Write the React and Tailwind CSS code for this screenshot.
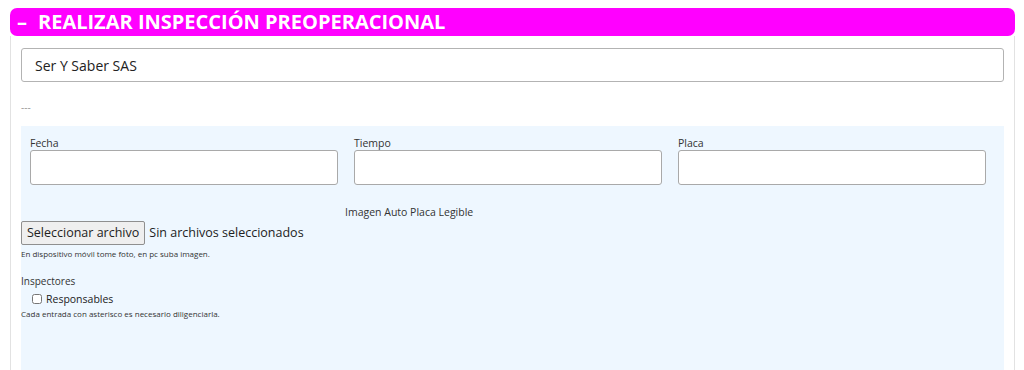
export default function App() {
  return (
    <div
      className="w-[1024px] h-[370px] overflow-hidden bg-white"
      style={{ fontFamily: '"Open Sans", "Noto Sans", sans-serif' }}
    >
      <div className="pt-[8px] pl-[10px] w-[1015px]">
        <div className="h-[28px] bg-[#ff00ff] rounded-[7px] flex items-center pl-[7px] text-white font-bold text-[20px] leading-none">
          <span className="mr-[11px]">–</span>
          <span>REALIZAR INSPECCIÓN PREOPERACIONAL</span>
        </div>

        <div className="border-l border-r border-[#e2e2e2] px-[10px] pt-[12px] h-[340px]">
          <div className="h-[34px] border border-[#b3b3b3] rounded-[3px] flex items-center pl-[13px] text-[14px] text-[#222]">
            Ser Y Saber SAS
          </div>

          <div className="mt-[20px] text-[10px] text-[#999] leading-[10px]">---</div>

          <div className="mt-[14px] bg-[#eef7ff] h-[260px] pt-[10px]">
            <div className="flex gap-[16px] pl-[9px]">
              {["Fecha", "Tiempo", "Placa"].map((label) => (
                <div key={label} className="w-[308px]">
                  <div className="text-[10.5px] text-[#333] leading-[14px]">{label}</div>
                  <div className="h-[35px] bg-white border border-[#a9a9a9] rounded-[3px]"></div>
                </div>
              ))}
            </div>

            <div className="mt-[20px] pl-[324px] text-[10.5px] text-[#333] leading-[14px]">
              Imagen Auto Placa Legible
            </div>

            <div className="mt-[2px] flex items-center text-[12.5px] text-[#222]">
              <button className="h-[24px] px-[5px] bg-[#efefef] border border-[#8f8f8f] rounded-[2px] leading-none">
                Seleccionar archivo
              </button>
              <span className="ml-[4px]">Sin archivos seleccionados</span>
            </div>

            <div className="mt-[3px] text-[8px] text-[#333] leading-[12px]">
              En dispositivo móvil tome foto, en pc suba imagen.
            </div>

            <div className="mt-[14px] text-[10px] text-[#333] leading-[14px]">Inspectores</div>
            <label className="mt-[4px] flex items-center pl-[11px] text-[10.5px] text-[#222] leading-[14px]">
              <input type="checkbox" className="w-[10px] h-[10px] mr-[4px]" />
              Responsables
            </label>
            <div className="mt-[2px] text-[8px] text-[#333] leading-[12px]">
              Cada entrada con asterisco es necesario diligenciarla.
            </div>
          </div>
        </div>
      </div>
    </div>
  );
}
